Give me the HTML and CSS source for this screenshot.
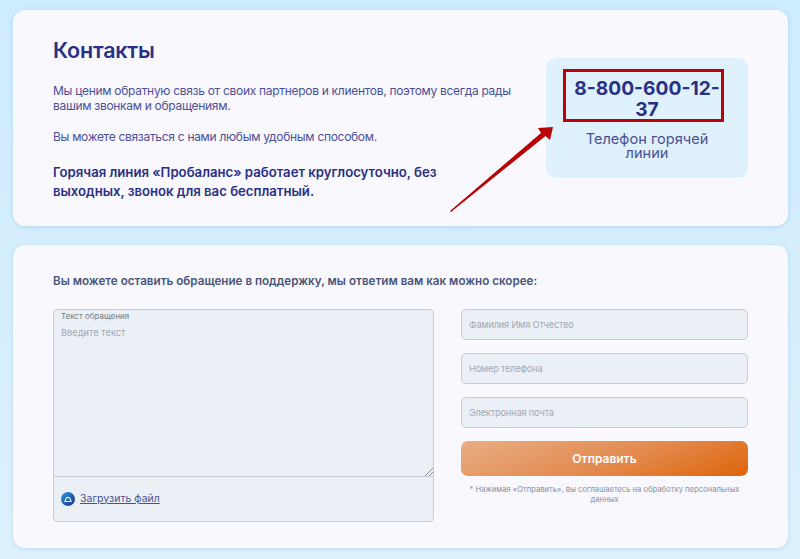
FILE: index.html
```html
<!DOCTYPE html>
<html lang="ru">
<head>
<meta charset="utf-8">
<title>Контакты</title>
<link rel="stylesheet" href="styles.css">
</head>
<body>
<section class="card top">
  <div class="intro">
    <h1>Контакты</h1>
    <p class="lead">Мы ценим обратную связь от своих партнеров и клиентов, поэтому всегда рады вашим звонкам и обращениям.</p>
    <p class="lead second">Вы можете связаться с нами любым удобным способом.</p>
    <p class="strong">Горячая линия «Пробаланс» работает круглосуточно, без выходных, звонок для вас бесплатный.</p>
  </div>
  <aside class="hotline">
    <div class="phone">8-800-600-12-<br>37</div>
    <div class="phone-label">Телефон горячей<br>линии</div>
    <div class="red-box"></div>
  </aside>
  <svg class="arrow" width="120" height="100" viewBox="0 0 120 100" aria-hidden="true">
    <path d="M0 86 L91 8 L88 3 L103 2 L100 15 L95.500 11 L1 87 Z" fill="#b80404"/>
  </svg>
</section>
<section class="card bottom">
  <h2>Вы можете оставить обращение в поддержку, мы ответим вам как можно скорее:</h2>
  <div class="form">
    <div class="message">
      <div class="text-area">
        <span class="small-label">Текст обращения</span>
        <span class="ph">Введите текст</span>
        <svg class="grip" width="8" height="8" viewBox="0 0 8 8" aria-hidden="true"><path d="M0 8 L8 0 M4 8 L8 4" stroke="#8f959c" stroke-width="1" fill="none"/></svg>
      </div>
      <div class="upload">
        <svg class="clip" width="14" height="14" viewBox="0 0 14 14" aria-hidden="true">
          <defs><linearGradient id="g" x1="0" y1="0" x2="1" y2="1"><stop offset="0" stop-color="#2a9be0"/><stop offset="1" stop-color="#1b2f86"/></linearGradient></defs>
          <circle cx="7" cy="7" r="7" fill="url(#g)"/>
          <path d="M3.800 9.500 H10.200 L8.800 6.600 A2 2 0 0 0 5.200 6.600 Z" fill="none" stroke="#d8ecf8" stroke-width="1.200" stroke-linejoin="round"/>
        </svg>
        <a class="link" href="#">Загрузить файл</a>
      </div>
    </div>
    <div class="side">
      <div class="field">Фамилия Имя Отчество</div>
      <div class="field">Номер телефона</div>
      <div class="field">Электронная почта</div>
      <button class="send" type="button">Отправить</button>
      <p class="note">* Нажимая «Отправить», вы соглашаетесь на обработку персональных данных</p>
    </div>
  </div>
</section>
</body>
</html>
```
FILE: styles.css
```css
* { box-sizing: border-box; }
html, body { height: 100%; }
body {
  margin: 0;
  height: 559px;
  overflow: hidden;
  padding: 10px 12px 0 13px;
  background: linear-gradient(180deg, #cdecfe 0%, #def1fd 100%);
  font-family: Inter, "Noto Sans", sans-serif;
  color: #2a3084;
}
.card {
  background: #f9f8ff;
  border-radius: 12px;
  box-shadow: 0 1px 4px rgba(120, 170, 210, .35);
}
.top {
  position: relative;
  height: 216px;
  padding: 29px 40px 0;
  display: flex;
  justify-content: space-between;
  align-items: flex-start;
}
.intro { width: 470px; }
h1 {
  margin: 0;
  font-size: 21.5px;
  line-height: 22px;
  font-weight: 600;
  letter-spacing: -.2px;
  color: #2a3084;
}
.lead {
  margin: 22px 0 0;
  font-size: 12px;
  line-height: 15px;
  letter-spacing: -.3px;
  color: #4b5096;
}
.second { margin-top: 16px; }
.strong {
  margin: 19px 0 0;
  width: 400px;
  font-size: 13.2px;
  line-height: 19px;
  font-weight: 600;
  letter-spacing: -.02px;
  color: #2a3084;
}
.hotline {
  position: relative;
  flex: none;
  width: 202px;
  height: 120px;
  margin-top: 19px;
  padding-top: 20px;
  background: #def1fd;
  border-radius: 10px;
  text-align: center;
}
.phone {
  font-size: 19.2px;
  line-height: 21px;
  font-weight: 700;
  color: #2a3084;
}
.phone-label {
  margin-top: 12px;
  font-size: 14.6px;
  line-height: 14px;
  color: #4b5096;
}
.red-box {
  position: absolute;
  left: 17px;
  top: 11px;
  width: 161px;
  height: 53px;
  border: 3px solid #b80404;
}
.arrow {
  position: absolute;
  left: 437px;
  top: 115px;
}
.bottom {
  height: 303px;
  margin-top: 19px;
  padding: 29px 40px 0;
}
h2 {
  margin: 0;
  font-size: 11.65px;
  line-height: 15px;
  font-weight: 600;
  color: #4a5578;
}
.form {
  margin-top: 20px;
  display: grid;
  grid-template-columns: 381px 287px;
  column-gap: 27px;
}
.message {
  height: 213px;
  display: flex;
  flex-direction: column;
  background: #ebf0f6;
  border: 1px solid #c8cdd2;
  border-radius: 4px;
}
.text-area {
  position: relative;
  height: 167px;
  padding: 1px 7px;
  border-bottom: 1px solid #c8cdd2;
  display: flex;
  flex-direction: column;
}
.small-label { font-size: 8px; line-height: 11px; color: #767c88; }
.ph { margin-top: 4px; font-size: 9.3px; line-height: 14px; color: #a3a8b2; }
.grip { position: absolute; right: 0; bottom: 0; }
.upload {
  flex: 1;
  display: flex;
  align-items: center;
  gap: 5px;
  padding: 0 7px 1px;
}
.link { font-size: 10.5px; line-height: 14px; color: #4b5096; }
.side { display: flex; flex-direction: column; }
.field {
  height: 31px;
  margin-bottom: 13px;
  padding: 0 7px;
  display: flex;
  align-items: center;
  background: #ebf0f6;
  border: 1px solid #c8cdd2;
  border-radius: 5px;
  font-size: 9.2px;
  letter-spacing: -.15px;
  color: #a3a8b2;
}
.send {
  height: 35px;
  border: 0;
  border-radius: 7px;
  background: linear-gradient(160deg, #e8ae84 0%, #e38a4e 55%, #de6408 100%);
  color: #fff;
  font: 600 12px/1 Inter, "Noto Sans", sans-serif;
}
.note {
  margin: 9px 0 0;
  padding: 0 4px;
  font-size: 7.65px;
  line-height: 10px;
  text-align: center;
  color: #8a8f9c;
}
```
